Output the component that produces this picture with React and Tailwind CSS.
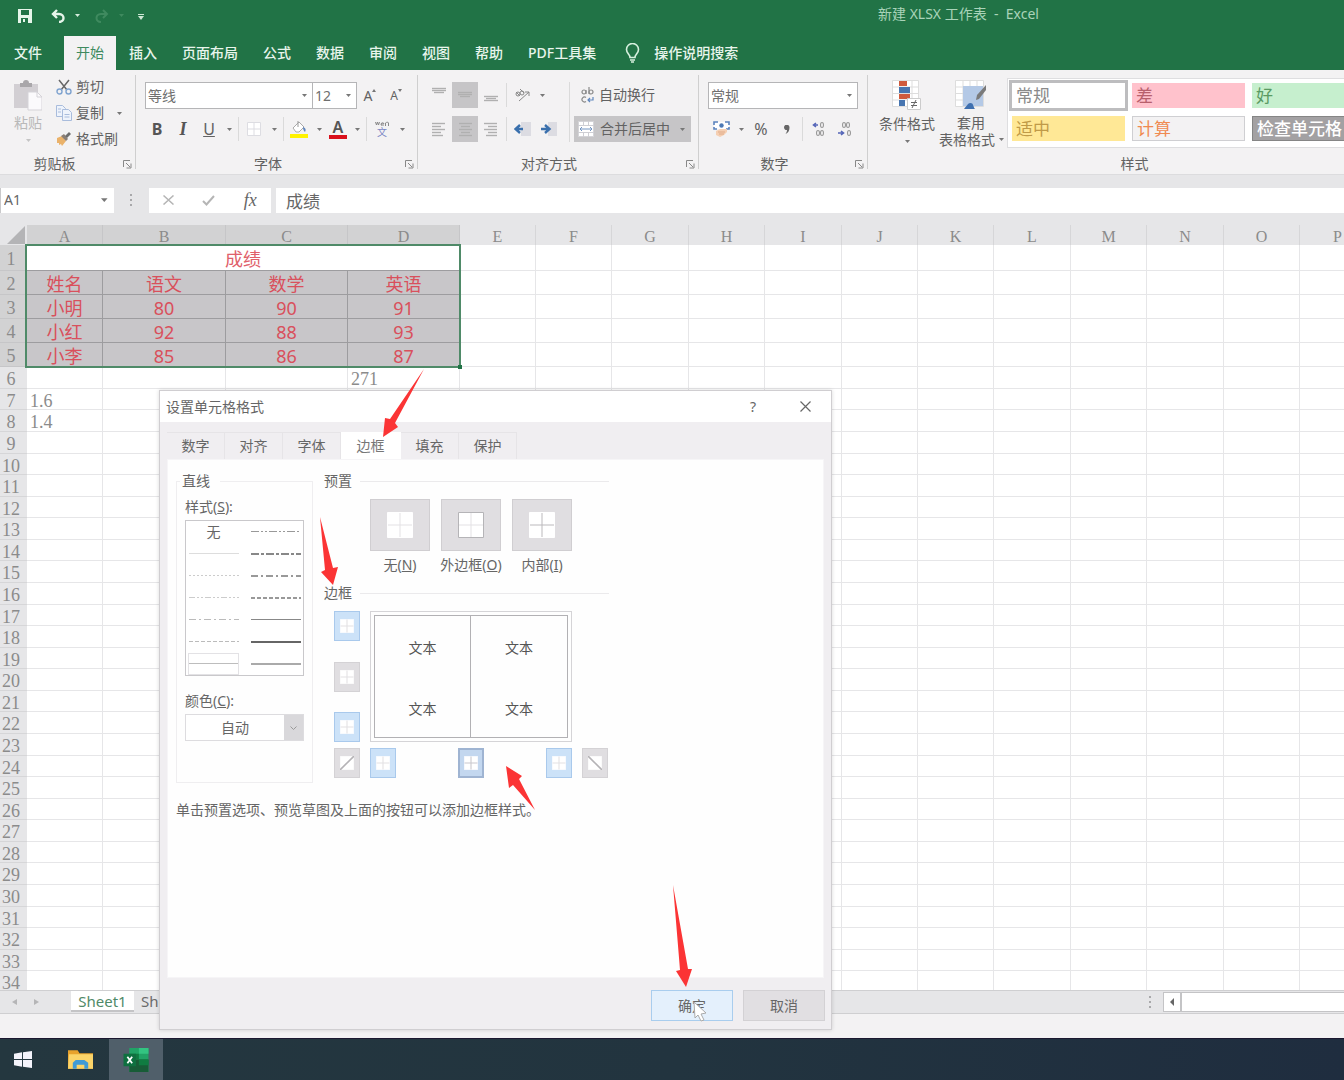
import React from "react";

const Caret = ({ className = "w-[14px]" }) => (
  <button type="button" aria-label="更多选项" className={`flex h-6 shrink-0 items-center justify-center ${className}`}>
    <svg width="5" height="3" viewBox="0 0 5 3"><path d="M0 0h5L2.500 3z" fill="#777" /></svg>
  </button>
);

const Sep = () => (
  <span className="flex w-[5px] shrink-0 justify-center"><span className="h-6 w-px bg-[#dadada]" /></span>
);

const Tool = ({ label, active, className = "w-[26px]", children }) => (
  <button
    type="button"
    aria-label={label}
    className={`flex h-[26px] shrink-0 items-center justify-center ${active ? "bg-[#c6c5c7]" : ""} ${className}`}
  >
    {children}
  </button>
);

const Drop = ({ label, value, options, className }) => (
  <div className={`relative h-[27px] border border-[#b5b5b7] bg-white ${className}`}>
    <select
      aria-label={label}
      defaultValue={value}
      className="h-full w-full appearance-none bg-transparent pl-0.5 text-sm leading-5 text-[#6f6f6f] outline-none"
    >
      {options.map((o) => <option key={o}>{o}</option>)}
    </select>
    <svg className="pointer-events-none absolute top-[11px] right-[5px]" width="5" height="3" viewBox="0 0 5 3">
      <path d="M0 0h5L2.500 3z" fill="#777" />
    </svg>
  </div>
);

const Group = ({ name, className = "", children }) => (
  <section className={`flex shrink-0 flex-col pt-3 ${className}`}>
    <div className="h-[73px]">{children}</div>
    <div className="flex h-5 items-center">
      <span className="flex-1 pr-2.5 text-center leading-5">{name}</span>
      <button type="button" aria-label={`${name}设置`} className="flex w-4 items-center justify-center">
        <svg width="9" height="9" viewBox="0 0 9 9" fill="none" stroke="#888">
          <path d="M.5 7V.5H7M3 3l4 4M8 3.500V8H3.500" />
        </svg>
      </button>
    </div>
  </section>
);

const GroupLine = () => <div className="my-[5px] w-px shrink-0 bg-[#cfcfcf]" />;

const AlignIcon = ({ rows, y = 3, step = 3 }) => (
  <svg width="16" height="16" viewBox="0 0 16 16" stroke="#b0b0b0" strokeWidth="1.400" fill="none">
    {rows.map(([a, b], i) => <path key={i} d={`M${a} ${y + i * step - 0.5}H${b}`} />)}
  </svg>
);

const IndentIcon = ({ flip }) => (
  <svg width="17" height="16" viewBox="0 0 17 16" fill="none">
    <path d={flip ? "M8 1h9v14H8z" : "M7 1h10v14H7z"} fill="#dcdce2" />
    {flip
      ? <path d="M1 8h8M5 4l4.500 4L5 12" stroke="#3a70ad" strokeWidth="2.400" />
      : <path d="M9 8H2M6 4L1.500 8 6 12" stroke="#3a70ad" strokeWidth="2.400" />}
  </svg>
);

const Digits = ({ row1, row2, children }) => (
  <svg width="15" height="16" viewBox="0 0 15 16" fill="none" stroke="#9a9a9a" strokeWidth="1.100">
    {row1.map((x) => <ellipse key={x} cx={x} cy="4" rx="1.500" ry="2.500" />)}
    {row2.map((x) => <ellipse key={x} cx={x} cy="12" rx="1.500" ry="2.500" />)}
    {children}
  </svg>
);

const fileTabs = ["插入", "页面布局", "公式", "数据", "审阅", "视图", "帮助", "PDF工具集"];

function TitleBar() {
  return (
    <header className="bg-[#217346] text-white">
      <div className="flex h-9 items-start">
        <div className="flex h-[31px] items-center pl-[17px]">
          <button type="button" aria-label="保存" className="w-[34px]">
            <svg width="16" height="14" viewBox="0 0 16 14">
              <path d="M1 0h14v14H1z" fill="#e6f5ea" />
              <path d="M4 1h8v5H4zM4 9h7v5H4z" fill="#217346" /><path d="M6 10h2v3H6z" fill="#e6f5ea" />
            </svg>
          </button>
          <button type="button" aria-label="撤消" className="w-5">
            <svg width="14" height="14" viewBox="0 0 14 14" fill="none" stroke="#e6f5ea" strokeWidth="2.400">
              <path d="M6 1L2 5l4 4M2 5h6c3 0 4.500 2 4.500 4S11 13 8 13" />
            </svg>
          </button>
          <svg className="mr-[15px] ml-1" width="5" height="3" viewBox="0 0 5 3"><path d="M0 0h5L2.500 3z" fill="#d6ecdc" /></svg>
          <button type="button" aria-label="恢复" className="w-6">
            <svg width="14" height="14" viewBox="0 0 14 14" fill="none" stroke="#3f8a5f" strokeWidth="2">
              <path d="M8 1l4 4-4 4M12 5H6C3 5 1.500 7 1.500 9S3 13 6 13" />
            </svg>
          </button>
          <svg width="5" height="3" viewBox="0 0 5 3"><path d="M0 0h5L2.500 3z" fill="#3f8a5f" /></svg>
          <button type="button" aria-label="自定义快速访问工具栏" className="ml-[14px] pt-0.5">
            <svg width="6" height="6" viewBox="0 0 6 6"><path d="M0 0h6v1H0zM0 2h6L3 6z" fill="#cfe8d6" /></svg>
          </button>
        </div>
        <p className="flex-1 pt-1 pl-[734px] leading-5 whitespace-pre text-[#a9d3b9]">新建 XLSX 工作表  -  Excel</p>
      </div>
      <nav className="flex h-[34px] items-stretch gap-px font-medium text-[#e8f5ec]">
        <button type="button" className="mr-[7px] w-14">文件</button>
        <button type="button" className="bg-[#f3f2f3] px-3 font-normal text-[#3f8a5f]">开始</button>
        {fileTabs.map((t) => <button type="button" key={t} className="px-3 whitespace-nowrap">{t}</button>)}
        <button type="button" className="flex items-center gap-[14px] pl-4 whitespace-nowrap">
          <svg width="15" height="20" viewBox="0 0 15 20" fill="none" stroke="#d6f0de" strokeWidth="1.600">
            <path d="M5 14.500c0-3-3.500-4-3.500-8a6 6 0 0 1 12 0c0 4-3.500 5-3.500 8z" /><path d="M5 17h5M6 19h3" />
          </svg>
          操作说明搜索
        </button>
      </nav>
    </header>
  );
}

const stylesList = [
  ["常规", "bg-white text-[#8a8a8a] outline-3 outline-[#bdbdbf]"],
  ["差", "bg-[#ffc2cc] text-[#b8606c]"],
  ["好", "bg-[#c6efce] text-[#5a9a62]"],
  ["适中", "bg-[#ffe896] text-[#c09a48]"],
  ["计算", "border border-[#cfcfd2] bg-[#f3f2f3] text-[#f08a50]"],
  ["检查单元格", "border border-[#858585] bg-[#a3a1a3] font-medium text-white"],
];

function Ribbon() {
  return (
    <div className="flex h-[105px] overflow-hidden border-b border-[#dcdcde] bg-[#f3f2f3] text-[#626262]">
      <Group name="剪贴板" className="w-[135px]">
        <div className="-mt-2 flex">
          <button type="button" className="flex w-14 flex-col items-center pt-1.5 text-[#b9b9b9]">
            <svg width="28" height="31" viewBox="0 0 28 31">
              <path d="M0 4h24v24H0z" fill="#d2cfd3" /><path d="M6 3h3a3 3 0 0 1 6 0h3v4H6z" fill="#a9a7aa" />
              <path d="M14 12h9l5 5v13H14z" fill="#fbfafc" stroke="#d5d3d8" /><path d="M23 12v5h5" fill="none" stroke="#d5d3d8" />
            </svg>
            <span className="leading-6">粘贴</span>
            <svg className="mt-1" width="5" height="3" viewBox="0 0 5 3"><path d="M0 0h5L2.500 3z" fill="#c4c4c4" /></svg>
          </button>
          <div className="flex flex-col">
            <button type="button" className="flex h-[26px] items-center gap-1">
              <svg width="16" height="16" viewBox="0 0 16 16" fill="none">
                <path d="M3 1l8 10M13 1L5 11" stroke="#666" strokeWidth="1.500" />
                <circle cx="3.500" cy="12.500" r="2.500" stroke="#7fa3cf" strokeWidth="1.400" />
                <circle cx="12.500" cy="12.500" r="2.500" stroke="#7fa3cf" strokeWidth="1.400" />
              </svg>剪切
            </button>
            <div className="flex items-center">
              <button type="button" className="flex h-[26px] items-center gap-1">
                <svg width="16" height="16" viewBox="0 0 16 16" fill="#eef3fb" stroke="#a9bcdc">
                  <path d="M.5.5h6l3 3v8h-9z" /><path d="M6.500 4.500h6l3 3v8h-9z" /><path d="M2 4h3M2 7h3M8.500 9.500h5M8.500 12h5" />
                </svg>复制
              </button>
              <Caret className="ml-2 w-[14px]" />
            </div>
            <button type="button" className="flex h-[26px] items-center gap-1">
              <svg width="16" height="14" viewBox="0 0 16 14">
                <path d="M1 6l5-2 4 5-4 5-1-2-2 1 0-2-2 0z" fill="#eab26a" /><path d="M5 4l3-2 4 5-2 2z" fill="#8a7f76" />
                <path d="M9 4l4-4 2 2-4 4z" fill="#6d6d6d" />
              </svg>格式刷
            </button>
          </div>
        </div>
      </Group>
      <GroupLine />

      <Group name="字体" className="w-[281px] pl-[9px]">
        <div className="flex items-center">
          <Drop label="字体" value="等线" options={["等线", "宋体", "黑体"]} className="w-[168px]" />
          <Drop label="字号" value="12" options={["11", "12", "14"]} className="-ml-px w-[45px]" />
          <Tool label="增大字号">
            <span className="text-sm">A</span>
            <svg className="mb-2.5" width="4" height="3" viewBox="0 0 4 3"><path d="M0 3l2-3 2 3z" fill="#777" /></svg>
          </Tool>
          <Tool label="减小字号">
            <span className="text-xs">A</span>
            <svg className="mb-2.5" width="4" height="3" viewBox="0 0 4 3"><path d="M0 0l2 3 2-3z" fill="#777" /></svg>
          </Tool>
        </div>
        <div className="mt-[7px] -ml-px flex items-center">
          <Tool label="加粗"><b className="text-base text-[#555]">B</b></Tool>
          <Tool label="倾斜"><i className="font-[Liberation_Serif] text-lg font-bold text-[#555]">I</i></Tool>
          <Tool label="下划线"><u className="text-base">U</u></Tool>
          <Caret /><Sep />
          <Tool label="边框">
            <svg width="14" height="14" viewBox="0 0 14 14" fill="#fff" stroke="#dddde2"><path d="M.5.5h13v13H.5zM7 0v14M0 7h14" /></svg>
          </Tool>
          <Caret /><Sep />
          <Tool label="填充颜色">
            <svg width="18" height="18" viewBox="0 0 18 18">
              <path d="M3 8l6-6 5 5-5 5H6z" fill="#fff" stroke="#aaa" /><path d="M8 1v6" stroke="#999" /><path d="M13 7c3 1 3 3 2 5-1-1-2-2-2-5z" fill="#5f86bd" />
              <path d="M0 14h18v4H0z" fill="#fff200" />
            </svg>
          </Tool>
          <Caret />
          <Tool label="字体颜色" className="w-6">
            <span className="flex flex-col items-center">
              <span className="text-base leading-4 font-semibold text-[#555]">A</span>
              <span className="h-1 w-[18px] bg-[#d9101c]" />
            </span>
          </Tool>
          <Caret /><Sep />
          <Tool label="拼音指南">
            <span className="flex flex-col items-center">
              <svg width="14" height="5" viewBox="0 0 14 5" fill="none" stroke="#888"><path d="M.5 1l1 3 1-3 1 3 1-3M6 3h3a1.500 1.500 0 1 0-.5 1.500M10.500 5V2c1-1 3-1 3 0v3" /></svg>
              <span className="text-[10px] leading-[12px] text-[#7b86c4]">文</span>
            </span>
          </Tool>
          <Caret />
        </div>
      </Group>
      <GroupLine />

      <Group name="对齐方式" className="w-[280px] pl-2">
        <div className="flex">
          <div className="flex flex-col gap-2">
            <div className="flex items-center">
              <Tool label="顶端对齐"><AlignIcon y={2} step={2} rows={[[1, 15], [1, 15], [3, 13]]} /></Tool>
              <Tool label="垂直居中" active><AlignIcon y={6} step={2} rows={[[1, 15], [1, 15], [3, 13]]} /></Tool>
              <Tool label="底端对齐"><AlignIcon y={10} step={2} rows={[[1, 15], [3, 13], [1, 15]]} /></Tool>
              <Sep />
              <Tool label="方向">
                <svg width="17" height="16" viewBox="0 0 17 16" fill="none" stroke="#888">
                  <path d="M5 14L15 5M15 5h-4M15 5v4" /><circle cx="4" cy="7" r="2" /><circle cx="8" cy="6" r="2" /><path d="M2 5l4 4M6 2l4 4" />
                </svg>
              </Tool>
              <Caret />
            </div>
            <div className="flex items-center">
              <Tool label="左对齐"><AlignIcon rows={[[1, 14], [1, 10], [1, 14], [1, 10], [1, 12]]} /></Tool>
              <Tool label="居中" active><AlignIcon rows={[[2, 15], [4, 13], [2, 15], [4, 13], [2, 15]]} /></Tool>
              <Tool label="右对齐"><AlignIcon rows={[[1, 14], [5, 14], [1, 14], [5, 14], [3, 14]]} /></Tool>
              <Sep />
              <Tool label="减少缩进量"><IndentIcon /></Tool>
              <Tool label="增加缩进量"><IndentIcon flip /></Tool>
            </div>
          </div>
          <div className="mr-1 ml-2 h-[60px] w-px bg-[#dadada]" />
          <div className="flex flex-col gap-2">
            <button type="button" className="flex h-[26px] items-center gap-[5px] pl-[6px]">
              <svg width="14" height="16" viewBox="0 0 14 16" fill="none" stroke="#8a8a8a" strokeWidth="1.200">
                <circle cx="4" cy="5" r="2" /><path d="M6 3v4M9 0v7" /><circle cx="11" cy="5" r="2" />
                <path d="M6 10.500a2.500 2.500 0 1 0 0 4" /><path d="M13 10v3H8M10 11l-2 2 2 2" stroke="#5f86bd" />
              </svg>
              自动换行
            </button>
            <div className="flex items-center bg-[#c6c5c7]">
              <button type="button" className="flex h-[26px] items-center gap-1.5 pl-1">
                <svg width="16" height="16" viewBox="0 0 16 16">
                  <path d="M.5.5h15v15H.5z" fill="#fff" stroke="#d4d4d8" /><path d="M0 4.500h16M0 11.500h16M5.500 0v4M10.500 0v4M5.500 12v4M10.500 12v4" stroke="#cfcfd4" />
                  <path d="M2 8h12M4 6L2 8l2 2M12 6l2 2-2 2" stroke="#7496c2" fill="none" />
                </svg>
                合并后居中
              </button>
              <Caret className="mr-px ml-1 w-4" />
            </div>
          </div>
        </div>
      </Group>
      <GroupLine />

      <Group name="数字" className="w-[168px] pl-[9px]">
        <Drop label="数字格式" value="常规" options={["常规", "数字", "货币"]} className="w-[150px]" />
        <div className="mt-[7px] flex items-center">
          <Tool label="会计数字格式">
            <svg width="17" height="16" viewBox="0 0 17 16" fill="none">
              <path d="M1 1h15v7H1z" fill="#fff" /><path d="M1 4V1h4M12 1h4v3M1 6v2h3M13 8h3V6" stroke="#5b83bd" strokeWidth="1.600" /><circle cx="8.500" cy="4.500" r="2.200" fill="#4d79b5" />
              <path d="M3 10l4-2h7v3l-3 3-4 2-4-2z" fill="#f5cfb2" /><path d="M5 11h7M6 13h5" stroke="#e0ab88" />
            </svg>
          </Tool>
          <Caret />
          <Tool label="百分比样式"><span className="text-base">%</span></Tool>
          <Tool label="千位分隔样式">
            <svg width="6" height="9" viewBox="0 0 6 9"><path d="M0 2.500a2.500 2.500 0 1 1 5.500 0C5.500 6 4 8 1.500 9 2.500 7.500 3 6.500 3 5A2.500 2.500 0 0 1 0 2.500z" fill="#666" /></svg>
          </Tool>
          <Sep />
          <Tool label="增加小数位数">
            <Digits row1={[11]} row2={[7, 11]}><path d="M7 4H3M5 2L2.500 4 5 6" stroke="#5566b8" strokeWidth="1.600" /></Digits>
          </Tool>
          <Tool label="减少小数位数">
            <Digits row1={[7, 11]} row2={[12]}><path d="M1 12h5M4 10l2.500 2L4 14" stroke="#5566b8" strokeWidth="1.600" /></Digits>
          </Tool>
        </div>
      </Group>
      <GroupLine />

      <Group name="样式" className="w-[550px] pl-[9px]">
        <div className="-mt-1 flex">
          <button type="button" className="flex w-[60px] flex-col items-center pt-0.5">
            <svg width="30" height="30" viewBox="0 0 30 30">
              <path d="M.5.5h26v26H.5z" fill="#fff" stroke="#ddd" /><path d="M0 7h27M0 13.500h27M0 20h27M20 0v27" stroke="#ddd" />
              <path d="M7 1h8v5H7z" fill="#cf5a3c" /><path d="M7 7h11v6H7z" fill="#4775b0" /><path d="M7 14h11v5H7z" fill="#cf5a3c" /><path d="M7 20h6v6H7z" fill="#4775b0" />
              <path d="M15.500 18.500h13v11h-13z" fill="#fff" stroke="#ccc" /><path d="M19 22.500h6M19 25.500h6M24 20l-4 8" stroke="#666" />
            </svg>
            <span className="mt-0.5 leading-6 whitespace-nowrap">条件格式</span>
            <svg className="mt-1" width="5" height="3" viewBox="0 0 5 3"><path d="M0 0h5L2.500 3z" fill="#777" /></svg>
          </button>
          <button type="button" className="ml-0.5 flex w-[68px] flex-col pt-0.5">
            <span className="flex flex-col items-center pr-1">
              <svg width="32" height="30" viewBox="0 0 32 30">
                <path d="M.5.5h28v26H.5z" fill="#fff" stroke="#ddd" /><path d="M0 7h28M0 13.500h28M0 20h28M8 0v27M15 0v27M22 0v27" stroke="#ddd" />
                <path d="M8 6h20v20H8z" fill="#b4c9e6" /><path d="M21 20l1-5 9-10v5l-7 9z" fill="#7a7a7a" /><path d="M9 29c1-2 3-3 4-5 2-2 5-1 5 1 1 2 1 3 2 4z" fill="#3f70b0" />
              </svg>
              <span className="mt-1 leading-[17px]">套用</span>
            </span>
            <span className="flex items-center gap-1 leading-[17px] whitespace-nowrap">
              表格格式
              <svg width="5" height="3" viewBox="0 0 5 3"><path d="M0 0h5L2.500 3z" fill="#777" /></svg>
            </span>
          </button>
          <div className="grid auto-rows-[25px] grid-cols-[113px_113px_113px] gap-x-[7px] gap-y-2 border border-[#dedee0] bg-white px-1 py-1 text-[17px]">
            {stylesList.map(([n, c]) => (
              <button type="button" key={n} className={`overflow-hidden pl-1 text-left leading-6 whitespace-nowrap ${c}`}>{n}</button>
            ))}
          </div>
        </div>
      </Group>
    </div>
  );
}

function FormulaBar() {
  return (
    <div className="flex h-[50px] shrink-0 items-center bg-[#e6e6e8] text-[#666]">
      <div className="flex h-[25px] w-[114px] items-center border-l border-[#c9c9cb] bg-white pr-1.5">
        <input aria-label="名称框" defaultValue="A1" className="w-full min-w-0 bg-transparent pl-[3px] text-sm outline-none" />
        <svg width="7" height="4" viewBox="0 0 7 4"><path d="M0 0h7L3.500 4z" fill="#777" /></svg>
      </div>
      <svg className="mx-4" width="3" height="12" viewBox="0 0 3 12" fill="#a8a8aa"><path d="M0 0h2v2H0zM0 5h2v2H0zM0 10h2v2H0z" /></svg>
      <div className="flex h-[25px] w-[122px] items-center justify-around bg-white">
        <button type="button" aria-label="取消输入"><svg width="11" height="10" viewBox="0 0 11 10" stroke="#b5b5b5" strokeWidth="1.500"><path d="M.5.5l10 9M10.500.5l-10 9" /></svg></button>
        <button type="button" aria-label="输入"><svg width="13" height="11" viewBox="0 0 13 11" stroke="#b5b5b5" strokeWidth="2" fill="none"><path d="M1 6l3.500 3.500L12 1" /></svg></button>
        <button type="button" aria-label="插入函数" className="font-[Liberation_Serif] text-lg leading-5 italic">fx</button>
      </div>
      <input aria-label="编辑栏" defaultValue="成绩" className="ml-[5px] h-[25px] min-w-0 flex-1 bg-white pl-[10px] text-[17px] outline-none" />
    </div>
  );
}

const columns = [
  ["A", 76], ["B", 123], ["C", 122], ["D", 112], ["E", 76], ["F", 76], ["G", 77], ["H", 76], ["I", 77], ["J", 76],
  ["K", 76], ["L", 77], ["M", 76], ["N", 77], ["O", 76], ["P", 76],
];
const scores = [
  ["姓名", "语文", "数学", "英语"],
  ["小明", "80", "90", "91"],
  ["小红", "92", "88", "93"],
  ["小李", "85", "86", "87"],
];
const loose = { "6D": "271", "7A": "1.6", "8A": "1.4" };

const rowHeight = (n) => {
  if (n === 1) return "h-[26px]";
  if (n <= 5) return "h-6";
  return [1, 4, 6].includes((n - 6) % 7) ? "h-[21px]" : "h-[22px]";
};

function Sheet() {
  return (
    <main className="relative min-h-0 flex-1 overflow-hidden bg-white">
      <table className="w-max table-fixed border-separate border-spacing-0">
        <colgroup>
          <col style={{ width: 27 }} />
          {columns.map(([c, w]) => <col key={c} style={{ width: w }} />)}
        </colgroup>
        <thead>
          <tr className="h-5 font-[Liberation_Serif] text-base leading-4 text-[#8b8b8b]">
            <th className="bg-[#e6e6e8] p-0">
              <svg className="ml-[7px]" width="18" height="18" viewBox="0 0 18 18"><path d="M18 0v18H0z" fill="#b4b4b6" /></svg>
            </th>
            {columns.map(([c], i) => (
              <th key={c} className={`border-r p-0 pt-[3px] font-normal ${i < 4 ? "border-[#c6c6c8] bg-[#d2d2d3]" : "border-[#d6d6d8] bg-[#e6e6e8]"}`}>{c}</th>
            ))}
          </tr>
        </thead>
        <tbody>
          {Array.from({ length: 34 }, (_, r) => r + 1).map((n) => (
            <tr key={n} className={`${rowHeight(n)} leading-none`}>
              <th className={`border-b p-0 pt-[3px] pr-[5px] text-center font-[Liberation_Serif] text-lg leading-4 font-normal text-[#8b8b8b] ${n <= 5 ? "border-[#c6c6c8] bg-[#d2d2d3]" : "border-[#d6d6d8] bg-[#e6e6e8]"}`}>{n}</th>
              {n === 1 && (
                <td colSpan={4} className="border-r border-b border-[#9d9c9f] bg-white p-0 pt-[3px] text-center text-lg leading-5 text-[#e0606a]">成绩</td>
              )}
              {columns.map(([c], i) => {
                if (n === 1 && i < 4) return null;
                if (n <= 5 && i < 4)
                  return (
                    <td key={c} className="border-r border-b border-[#9d9c9f] bg-[#c8c6c9] p-0 pt-[2px] text-center text-lg leading-5 text-[#d9505c]">{scores[n - 2][i]}</td>
                  );
                return (
                  <td key={c} className="border-r border-b border-[#e6e6e8] p-0 pt-[3px] pl-[3px] font-[Liberation_Serif] text-lg leading-4 text-[#8b8b8b]">{loose[n + c]}</td>
                );
              })}
            </tr>
          ))}
        </tbody>
      </table>
      <div className="pointer-events-none absolute top-[19px] left-[25px] h-[124px] w-[436px] border-2 border-[#4f8a68]">
        <span className="absolute -right-[3px] -bottom-[3px] size-1 bg-[#217346]" />
      </div>
    </main>
  );
}

function BottomBars() {
  return (
    <footer className="shrink-0">
      <div className="flex h-6 items-stretch border-t border-b border-[#cfcfd1] bg-[#e6e6e8] text-[15px] text-[#6b6b6b]">
        <div className="flex w-[71px] items-center gap-[17px] pl-3 text-[#b5b5b7]">
          <button type="button" aria-label="上一个工作表"><svg width="5" height="6" viewBox="0 0 5 6"><path d="M5 0v6L0 3z" fill="currentColor" /></svg></button>
          <button type="button" aria-label="下一个工作表"><svg width="5" height="6" viewBox="0 0 5 6"><path d="M0 0v6l5-3z" fill="currentColor" /></svg></button>
        </div>
        <button type="button" className="h-[21px] w-[63px] border-b-2 border-[#c4c4c6] bg-white leading-[18px] text-[#4f8a68]">Sheet1</button>
        <button type="button" className="h-[19px] px-[7px] leading-[18px]">Sheet2</button>
        <div className="flex-1" />
        <svg className="mr-[11px] self-center" width="3" height="12" viewBox="0 0 3 12" fill="#a8a8aa"><path d="M0 0h2v2H0zM0 5h2v2H0zM0 10h2v2H0z" /></svg>
        <div className="my-px flex w-[181px] border border-r-0 border-[#c4c4c6] bg-white">
          <button type="button" aria-label="向左滚动" className="flex w-[18px] items-center justify-center border-r-2 border-[#c4c4c6]">
            <svg width="4" height="8" viewBox="0 0 4 8"><path d="M4 0v8L0 4z" fill="#666" /></svg>
          </button>
        </div>
      </div>
      <div className="h-6 bg-[#f3f2f3]" />
      <div className="flex h-[42px] items-stretch border-t border-[#1b1830] bg-linear-to-r from-[#24373f] via-[#22343f] to-[#1f2d3f]">
        <button type="button" aria-label="开始菜单" className="flex w-[46px] items-center justify-center">
          <svg width="18" height="17" viewBox="0 0 19 19" preserveAspectRatio="none" fill="#f4f4fb"><path d="M0 3l8.500-1.500V9H0zM9.500 1.300L19 0v9H9.500zM0 10h8.500v7.500L0 16zM9.500 10H19v9l-9.500-1.400z" /></svg>
        </button>
        <button type="button" aria-label="文件资源管理器" className="ml-[5px] flex w-[58px] items-center justify-center">
          <svg width="25" height="21" viewBox="0 0 26 21">
            <path d="M0 1h10l2 3h14v16H0z" fill="#e8a22c" /><path d="M1 5h25v15H0z" fill="#fbd469" />
            <path d="M5 20v-6l3-3h9l4 3v6h-4v-4h-8v4z" fill="#3f9bd6" />
          </svg>
        </button>
        <button type="button" aria-label="Excel" className="flex w-[54px] items-center justify-center bg-[#505f6a]">
          <svg width="26" height="24" viewBox="0 0 26 25">
            <path d="M6 0h20v25H6z" fill="#21a366" /><path d="M16 0h10v6H16z" fill="#33c481" /><path d="M6 6h10v6H6z" fill="#107c41" /><path d="M6 12h20v13H6z" fill="#185c37" /><path d="M16 12h10v6H16z" fill="#107c41" />
            <path d="M0 6h13v13H0z" fill="#0f7040" /><path d="M4 9l5 7M9 9l-5 7" stroke="#fff" strokeWidth="1.800" />
          </svg>
        </button>
      </div>
    </footer>
  );
}

const strokes = [
  ["无", { c: "#999", w: 1, d: "8 2 2 2 2 2" }],
  [{ c: "#ddd", w: 1, d: "" }, { c: "#888", w: 2, d: "8 2 3 2" }],
  [{ c: "#ccc", w: 1, d: "2 2" }, { c: "#999", w: 2, d: "7 3 2 3" }],
  [{ c: "#ccc", w: 1, d: "6 2 2 2 2 2" }, { c: "#999", w: 2, d: "4 2" }],
  [{ c: "#bbb", w: 1, d: "7 3 2 3" }, { c: "#888", w: 1, d: "" }],
  [{ c: "#bbb", w: 1, d: "4 2" }, { c: "#666", w: 2, d: "" }],
  [{ c: "#bbb", w: 1, d: "" }, { c: "#aaa", w: 2, d: "" }],
];

const dialogTabs = ["数字", "对齐", "字体", "边框", "填充", "保护"];

const WindowIcon = ({ size, outer = "#fff", inner = "#e3e1e4", diag }) => (
  <svg width={size} height={size} viewBox="0 0 26 26" fill="none">
    <path d="M.5.5h25v25H.5z" fill="#fff" stroke={outer} />
    {!diag && <path d="M13 1v24M1 13h24" stroke={inner} strokeWidth={size < 20 ? 2 : 1} />}
    {diag === "up" && <path d="M0 26L26 0" stroke="#b5b3b6" strokeWidth="3" />}
    {diag === "down" && <path d="M0 0l26 26" stroke="#b5b3b6" strokeWidth="3" />}
  </svg>
);

const tones = {
  on: "border border-[#a9c9ec] bg-[#cce2f8]",
  off: "border border-[#d4d2d5] bg-[#e0dee1]",
  focus: "border-2 border-[#9fb4d2] bg-[#c3d7ef]",
};
const EdgeButton = ({ label, tone, ...icon }) => (
  <button type="button" aria-label={label} className={`flex h-[30px] w-[26px] items-center justify-center ${tones[tone]}`}>
    <WindowIcon size={14} {...icon} />
  </button>
);

const Heading = ({ children }) => (
  <h3 className="flex items-center gap-2 leading-5">{children}<span className="h-px flex-1 bg-[#ebeaec]" /></h3>
);

function FormatDialog() {
  return (
    <div
      role="dialog"
      aria-label="设置单元格格式"
      className="absolute top-[390px] left-[159px] flex h-[640px] w-[673px] flex-col border border-[#d0ced1] bg-[#f0eef1] text-[#666] shadow-[0_0_4px_rgba(0,0,0,0.15)]"
    >
      <div className="flex h-[31px] items-center bg-white pr-5 pl-1.5">
        <h2 className="flex-1">设置单元格格式</h2>
        <button type="button" aria-label="帮助" className="mr-11">?</button>
        <button type="button" aria-label="关闭">
          <svg width="11" height="11" viewBox="0 0 11 11" stroke="#666" strokeWidth="1.200"><path d="M.5.5l10 10M10.500.5l-10 10" /></svg>
        </button>
      </div>
      <div role="tablist" className="mt-2.5 ml-[7px] flex h-[27px]">
        {dialogTabs.map((t) => (
          <button
            key={t}
            type="button"
            role="tab"
            aria-selected={t === "边框"}
            className={`shrink-0 border-t border-r ${t === "边框" ? "w-[60px] border-white bg-white text-[#777]" : "w-[58px] border-[#e6e4e7] bg-[#f0eef1]"}`}
          >
            {t}
          </button>
        ))}
      </div>
      <div className="mx-[7px] flex flex-1 flex-col border border-[#f6f5f7] bg-[#fefefe] px-2 pt-[11px]">
        <div className="flex gap-[11px]">
          <section className="relative h-[312px] w-[137px]">
            <div className="absolute inset-x-0 top-[10px] bottom-0 border border-[#efeef0]" />
            <div className="relative px-[9px]">
              <h3 className="-ml-[5px] w-10 bg-[#fefefe] pl-0.5 leading-5">直线</h3>
              <p className="mt-1.5 leading-5">样式(<u>S</u>):</p>
              <div role="listbox" aria-label="样式" className="mt-[3px] grid h-[156px] auto-rows-[22px] grid-cols-[51px_51px] justify-between border border-[#c9c8cb] bg-white px-0.5">
                {strokes.flat().map((s, i) => (
                  <button
                    type="button"
                    role="option"
                    aria-selected={i === 12}
                    aria-label={s === "无" ? "无" : `线条 ${i}`}
                    key={i}
                    className={`flex items-center justify-center leading-5 ${i === 12 ? "border border-[#e3e2e5]" : ""}`}
                  >
                    {s === "无" ? "无" : (
                      <svg width="50" height="4" viewBox="0 0 50 4"><path d={s.w === 1 ? "M0 1.500h50" : "M0 2h50"} stroke={s.c} strokeWidth={s.w} strokeDasharray={s.d} /></svg>
                    )}
                  </button>
                ))}
              </div>
              <label htmlFor="line-color" className="mt-[15px] block leading-5">颜色(<u>C</u>):</label>
              <div className="relative mt-[3px] h-[27px] border border-[#dddcdf] bg-white">
                <select id="line-color" defaultValue="自动" className="h-full w-full appearance-none bg-transparent pl-[35px] outline-none">
                  <option>自动</option><option>黑色</option>
                </select>
                <span className="pointer-events-none absolute inset-y-0 right-0 flex w-[19px] items-center justify-center bg-[#d9d8db]">
                  <svg width="7" height="4" viewBox="0 0 7 4" fill="none" stroke="#999"><path d="M.5.5l3 3 3-3" /></svg>
                </span>
              </div>
            </div>
          </section>
          <div className="w-[285px]">
            <Heading>预置</Heading>
            <div className="mt-2 ml-[46px] flex gap-[11px]">
              {[
                ["无", "N", {}],
                ["外边框", "O", { outer: "#b5b4b7" }],
                ["内部", "I", { inner: "#bbb9bc" }],
              ].map(([n, k, icon]) => (
                <button type="button" key={n} className="flex w-[60px] flex-col items-center">
                  <span className="flex h-[52px] w-full items-center justify-center border border-[#d0ced1] bg-[#e0dee1]"><WindowIcon size={26} {...icon} /></span>
                  <span className="mt-1 leading-5 whitespace-nowrap">{n}(<u>{k}</u>)</span>
                </button>
              ))}
            </div>
            <div className="mt-2"><Heading>边框</Heading></div>
            <div className="mt-2 ml-[10px] grid grid-cols-[26px_202px_26px] gap-x-[10px] gap-y-[6px]">
              <div className="flex h-[131px] flex-col justify-between">
                <EdgeButton label="上边框" tone="on" />
                <EdgeButton label="内部横线" tone="off" />
                <EdgeButton label="下边框" tone="on" />
              </div>
              <div className="border border-[#d5d4d7] p-[3px]">
                <div className="grid h-full grid-cols-2 border border-[#b2b1b4] text-[#555]">
                  {[0, 1, 2, 3].map((i) => (
                    <span key={i} className={`flex items-center justify-center pt-1 ${i % 2 ? "" : "border-r border-[#b2b1b4]"}`}>文本</span>
                  ))}
                </div>
              </div>
              <span />
              <EdgeButton label="左斜线" tone="off" diag="up" />
              <div className="flex justify-between">
                <EdgeButton label="左边框" tone="on" />
                <EdgeButton label="内部竖线" tone="focus" inner="#c9c8cd" />
                <EdgeButton label="右边框" tone="on" />
              </div>
              <EdgeButton label="右斜线" tone="off" diag="down" />
            </div>
          </div>
        </div>
        <p className="mt-[17px] leading-5">单击预置选项、预览草图及上面的按钮可以添加边框样式。</p>
      </div>
      <div className="flex h-[51px] items-center justify-end gap-[10px] pt-1 pr-1.5">
        <button type="button" className="h-[31px] w-[82px] border border-[#a9cdee] bg-[#e4f0fc]">确定</button>
        <button type="button" className="h-[31px] w-[82px] border border-[#d3d1d4] bg-[#e1dfe2]">取消</button>
      </div>
    </div>
  );
}

const Annotations = () => (
  <svg className="pointer-events-none absolute top-0 left-0" width="1344" height="1080" viewBox="0 0 1344 1080">
    <g fill="#fb3435">
      <path d="M424 369L390 419l-5-1-2 19 15-10-3-4z" />
      <path d="M320 517l5 53-4 2 12 13 5-18-5 1z" />
      <path d="M506 766l16 10-3 3 16 31-22-25-4 3z" />
      <path d="M673 885l7 85-4 1 10 16 6-18-4 0z" />
    </g>
    <path d="M694 1002l1 16 3-3 3 6 3-1-3-6 5-1z" fill="#fff" stroke="#aaa" />
  </svg>
);

export default function App() {
  return (
    <div className="relative flex h-screen flex-col overflow-hidden bg-white font-['Noto_Sans','Noto_Sans_CJK_SC',sans-serif] text-sm">
      <TitleBar />
      <Ribbon />
      <FormulaBar />
      <Sheet />
      <BottomBars />
      <FormatDialog />
      <Annotations />
    </div>
  );
}
